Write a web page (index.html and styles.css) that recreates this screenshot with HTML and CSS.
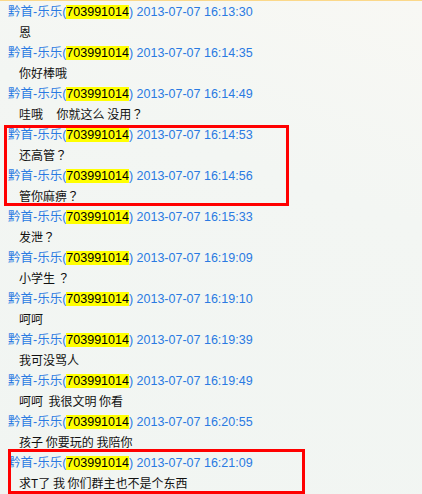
FILE: index.html
```html
<!DOCTYPE html>
<html>
  <head>
    <link rel="stylesheet" href="styles.css">
  </head>
  <body>
    <div class="chat">
      <div class="msg">
        <div class="head">黔首-乐乐(<span class="qq">703991014</span>) 2013-07-07 16:13:30</div>
        <div class="text">恩</div>
      </div>
      <div class="msg">
        <div class="head">黔首-乐乐(<span class="qq">703991014</span>) 2013-07-07 16:14:35</div>
        <div class="text">你好棒哦</div>
      </div>
      <div class="msg">
        <div class="head">黔首-乐乐(<span class="qq">703991014</span>) 2013-07-07 16:14:49</div>
        <div class="text">哇哦     你就这么 没用？</div>
      </div>
      <div class="mark mark-a">
        <div class="msg">
          <div class="head">黔首-乐乐(<span class="qq">703991014</span>) 2013-07-07 16:14:53</div>
          <div class="text">还高管？</div>
        </div>
        <div class="msg">
          <div class="head">黔首-乐乐(<span class="qq">703991014</span>) 2013-07-07 16:14:56</div>
          <div class="text">管你麻痹？</div>
        </div>
      </div>
      <div class="msg">
        <div class="head">黔首-乐乐(<span class="qq">703991014</span>) 2013-07-07 16:15:33</div>
        <div class="text">发泄？</div>
      </div>
      <div class="msg">
        <div class="head">黔首-乐乐(<span class="qq">703991014</span>) 2013-07-07 16:19:09</div>
        <div class="text">小学生 ？</div>
      </div>
      <div class="msg">
        <div class="head">黔首-乐乐(<span class="qq">703991014</span>) 2013-07-07 16:19:10</div>
        <div class="text">呵呵</div>
      </div>
      <div class="msg">
        <div class="head">黔首-乐乐(<span class="qq">703991014</span>) 2013-07-07 16:19:39</div>
        <div class="text">我可没骂人</div>
      </div>
      <div class="msg">
        <div class="head">黔首-乐乐(<span class="qq">703991014</span>) 2013-07-07 16:19:49</div>
        <div class="text">呵呵  我很文明 你看</div>
      </div>
      <div class="msg">
        <div class="head">黔首-乐乐(<span class="qq">703991014</span>) 2013-07-07 16:20:55</div>
        <div class="text">孩子 你要玩的 我陪你</div>
      </div>
      <div class="mark mark-b">
        <div class="msg">
          <div class="head">黔首-乐乐(<span class="qq">703991014</span>) 2013-07-07 16:21:09</div>
          <div class="text">求T了 我 你们群主也不是个东西</div>
        </div>
      </div>
    </div>
  </body>
</html>
```

FILE: styles.css
```css
html,
body {
  margin: 0;
  height: 494px;
  overflow: hidden;
}

body {
  background: linear-gradient(200deg, #f8f8f4 0%, #f3f6f3 35%, #f1f5f2 100%);
  font-family: "Liberation Sans", "Noto Sans CJK SC", sans-serif;
}

.chat {
  border-top: 1px solid #fbd88a;
  padding: 1px 0 0 8px;
}

.head {
  height: 20px;
  line-height: 20px;
  font-size: 12.5px;
  color: #2a7ae2;
  white-space: nowrap;
}

.qq {
  background: #ffff00;
  color: #000;
}

.text {
  height: 21px;
  line-height: 19px;
  padding-left: 11px;
  font-family: "Noto Sans CJK TC", "Liberation Sans", sans-serif;
  font-size: 12px;
  color: #111;
  white-space: pre;
}

.mark {
  position: relative;
}

.mark::after {
  content: "";
  position: absolute;
  box-sizing: border-box;
  border: 3px solid #ff0000;
}

.mark-a::after {
  left: -4px;
  top: 0;
  width: 285px;
  height: 81px;
}

.mark-b::after {
  left: 0;
  top: -4px;
  width: 297px;
  height: 45px;
}
```
